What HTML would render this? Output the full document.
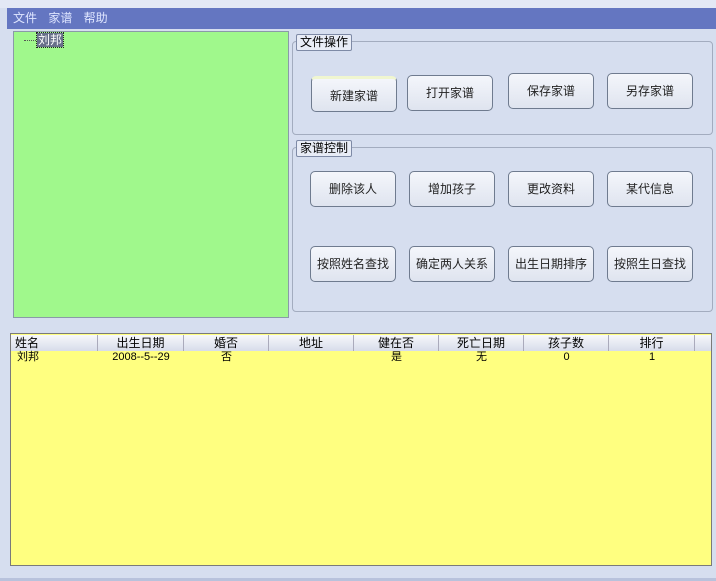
<!DOCTYPE html><html><head><meta charset="utf-8"><style>
*{margin:0;padding:0;box-sizing:border-box}
body{width:716px;height:581px;background:#d6deef;font-family:"Liberation Sans","Noto Sans CJK SC",sans-serif;font-size:12px;position:relative;overflow:hidden}
.a{position:absolute}
.menu{left:7px;top:8px;width:709px;height:21px;background:#6476c1;color:#dfe6ff;font-size:12px;line-height:21px;padding-left:6px;word-spacing:8px}
.green{left:13px;top:31px;width:276px;height:287px;background:#a0f88c;border:1px solid #8a9aa8}
.gb{border:1px solid #a3acbf;border-radius:4px}
.lab{background:#e8ecf6;border:1px solid #7e8aa6;border-radius:2px;padding:0 3px;font-size:12px;line-height:15px;color:#000}
.btn{width:86px;height:36px;border:1px solid #6f7b8f;border-radius:5px;background:linear-gradient(#f4f6fb,#dfe4ef);text-align:center;line-height:34px;color:#222;font-size:12px}
.list{left:10px;top:333px;width:702px;height:233px;background:#ffff80;border:1px solid #7a7a7a}
.hd{position:absolute;top:1px;height:16px;background:linear-gradient(#f7f8fb,#d7dcea);border-right:1px solid #aab;text-align:center;line-height:16px;font-size:12px}
.c{position:absolute;top:17px;text-align:center;line-height:13px;font-size:11px}
</style></head><body>
<div class="a" style="left:0;top:0;width:716px;height:8px;background:#e3e8f5"></div>
<div class="a menu">文件 家谱 帮助</div>
<div class="a green"><div class="a" style="left:10px;top:8px;width:12px;border-top:1px dotted #555"></div><div class="a" style="left:23px;top:1px;background:#68708a;color:#fff;padding:0 1px;line-height:14px;outline:1px dotted #222">刘邦</div></div>
<div class="a gb" style="left:292px;top:41px;width:421px;height:94px"></div>
<div class="a lab" style="left:296px;top:34px">文件操作</div>
<div class="a gb" style="left:292px;top:147px;width:421px;height:165px"></div>
<div class="a lab" style="left:296px;top:140px">家谱控制</div>
<div class="a btn" style="left:311px;top:76px;border-top:3px solid #f0f6d0">新建家谱</div>
<div class="a btn" style="left:407px;top:75px">打开家谱</div>
<div class="a btn" style="left:508px;top:73px">保存家谱</div>
<div class="a btn" style="left:607px;top:73px">另存家谱</div>
<div class="a btn" style="left:310px;top:171px">删除该人</div>
<div class="a btn" style="left:409px;top:171px">增加孩子</div>
<div class="a btn" style="left:508px;top:171px">更改资料</div>
<div class="a btn" style="left:607px;top:171px">某代信息</div>
<div class="a btn" style="left:310px;top:246px">按照姓名查找</div>
<div class="a btn" style="left:409px;top:246px">确定两人关系</div>
<div class="a btn" style="left:508px;top:246px">出生日期排序</div>
<div class="a btn" style="left:607px;top:246px">按照生日查找</div>
<div class="a list">
<div class="hd" style="left:0;width:87px;text-align:left;padding-left:4px">姓名</div>
<div class="hd" style="left:87px;width:86px">出生日期</div>
<div class="hd" style="left:173px;width:85px">婚否</div>
<div class="hd" style="left:258px;width:85px">地址</div>
<div class="hd" style="left:343px;width:85px">健在否</div>
<div class="hd" style="left:428px;width:85px">死亡日期</div>
<div class="hd" style="left:513px;width:85px">孩子数</div>
<div class="hd" style="left:598px;width:86px">排行</div>
<div class="hd" style="left:684px;width:16px;border:0"></div>
<div class="c" style="left:6px">刘邦</div>
<div class="c" style="left:87px;width:86px">2008--5--29</div>
<div class="c" style="left:173px;width:85px">否</div>
<div class="c" style="left:343px;width:85px">是</div>
<div class="c" style="left:428px;width:85px">无</div>
<div class="c" style="left:513px;width:85px">0</div>
<div class="c" style="left:598px;width:86px">1</div>
</div>
<div class="a" style="left:0;top:578px;width:716px;height:3px;background:#b8c2dc"></div>
</body></html>
